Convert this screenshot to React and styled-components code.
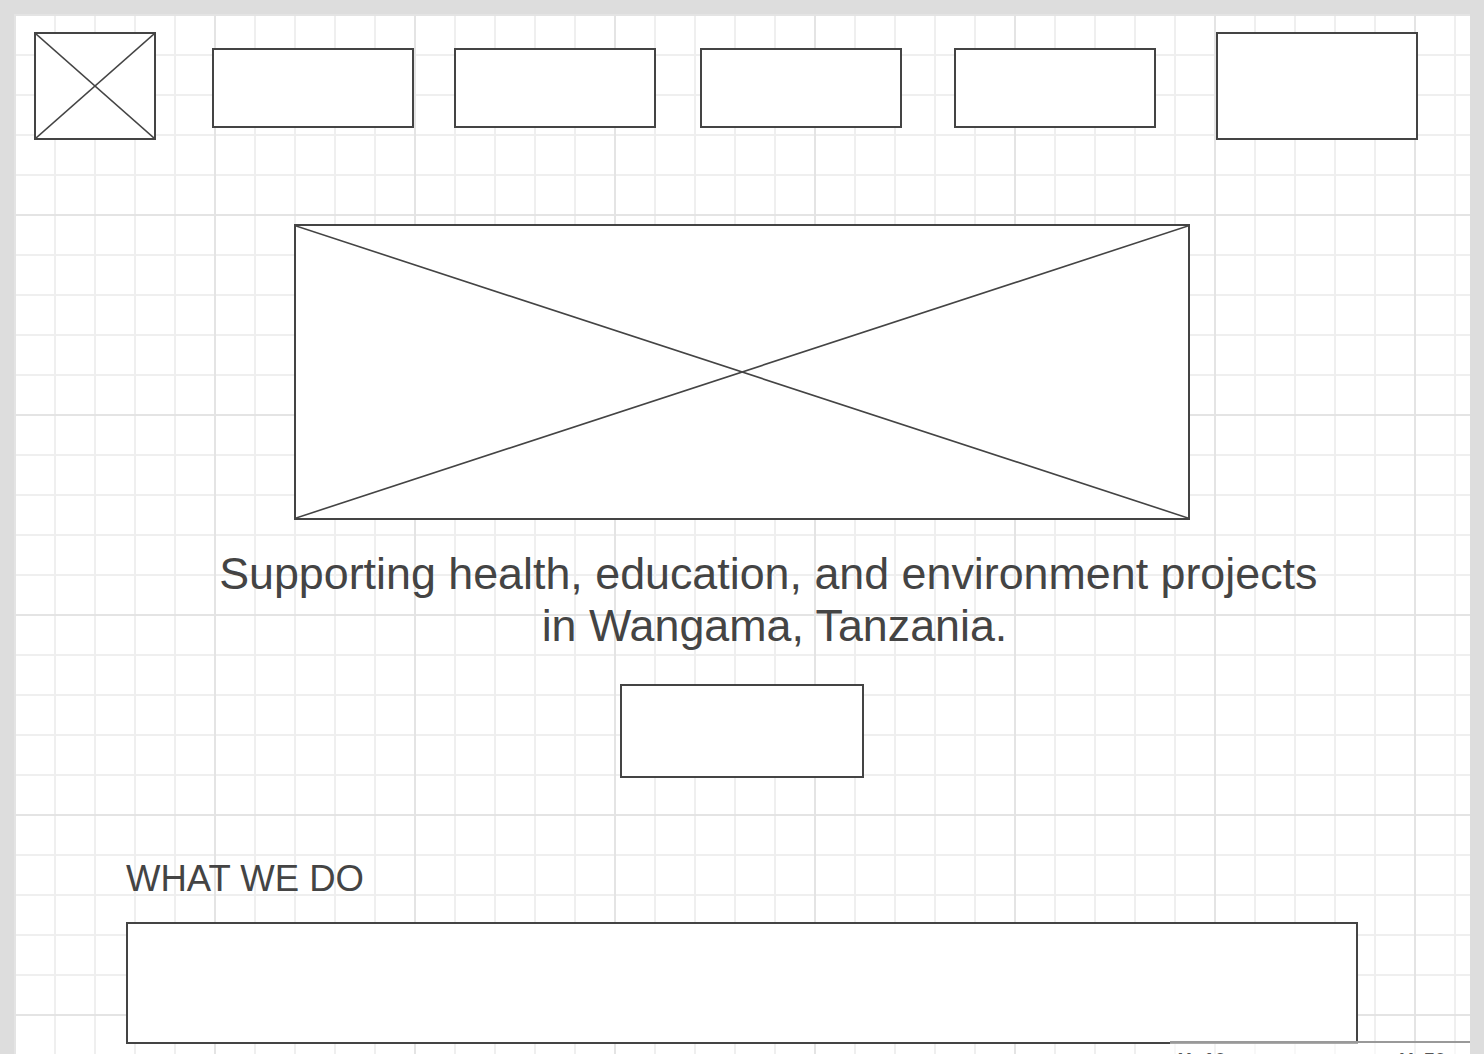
import React from "react";
import styled, { createGlobalStyle } from "styled-components";

const GlobalStyle = createGlobalStyle`
  html, body {
    margin: 0;
    padding: 0;
    background: #dddddd;
    overflow: hidden;
  }
  body {
    font-family: "Liberation Sans", Arial, sans-serif;
    color: #444444;
  }
`;

const Canvas = styled.div`
  position: relative;
  width: 1456px;
  min-height: 1040px;
  margin: 14px 0 0 14px;
  padding: 18px 0 0 0;
  box-sizing: border-box;
  background-color: #ffffff;
  background-image: linear-gradient(to right, #e4e4e4 2px, transparent 2px),
    linear-gradient(to bottom, #e4e4e4 2px, transparent 2px),
    linear-gradient(to right, #efefef 2px, transparent 2px),
    linear-gradient(to bottom, #efefef 2px, transparent 2px);
  background-size: 200px 200px, 200px 200px, 40px 40px, 40px 40px;
  background-position: 0 0;
  display: flex;
  flex-direction: column;
`;

const Box = styled.div`
  box-sizing: border-box;
  border: 2px solid #444444;
  background: #ffffff;
  flex-shrink: 0;
`;

const Header = styled.header`
  display: flex;
  align-items: flex-start;
  padding-left: 20px;
`;

const Logo = styled(Box)`
  width: 122px;
  height: 108px;
  position: relative;
`;

const NavBox = styled(Box)`
  width: 202px;
  height: 80px;
  margin-top: 16px;
  margin-left: ${(p) => p.$gap}px;
`;

const HeaderButton = styled(Box)`
  width: 202px;
  height: 108px;
  margin-left: 60px;
`;

const Cross = styled.svg`
  position: absolute;
  inset: 0;
  width: 100%;
  height: 100%;
  display: block;
`;

const Placeholder = () => (
  <Cross viewBox="0 0 100 100" preserveAspectRatio="none">
    <line x1="0" y1="0" x2="100" y2="100" stroke="#444" strokeWidth="1.6" vectorEffect="non-scaling-stroke" />
    <line x1="100" y1="0" x2="0" y2="100" stroke="#444" strokeWidth="1.6" vectorEffect="non-scaling-stroke" />
  </Cross>
);

const Hero = styled.section`
  display: flex;
  flex-direction: column;
  align-items: center;
`;

const HeroImage = styled(Box)`
  position: relative;
  width: 896px;
  height: 296px;
  margin-top: 84px;
`;

const Tagline = styled.p`
  margin: 27px 0 0 0;
  padding-left: 65px;
  font-size: 44.8px;
  line-height: 52px;
  text-align: center;
  color: #444444;
  white-space: pre;
`;

const CallToAction = styled(Box)`
  width: 244px;
  height: 94px;
  margin-top: 33px;
`;

const Section = styled.section`
  display: flex;
  flex-direction: column;
  padding-left: 112px;
  margin-top: 81px;
`;

const SectionTitle = styled.h2`
  margin: 0;
  font-size: 36.5px;
  font-weight: 400;
  line-height: 40px;
  color: #444444;
`;

const ContentBox = styled(Box)`
  width: 1232px;
  height: 122px;
  margin-top: 23px;
`;

const Coords = styled.div`
  position: absolute;
  left: 1156px;
  top: 1027px;
  width: 300px;
  height: 40px;
  background: rgba(255, 255, 255, 0.55);
  border-top: 2px solid #999999;
  display: flex;
  justify-content: space-between;
  padding: 6px 24px 0 8px;
  box-sizing: border-box;
  font-size: 20px;
  font-weight: 700;
  color: #555555;
`;

export default function App() {
  return (
    <>
      <GlobalStyle />
      <Canvas>
        <Header>
          <Logo>
            <Placeholder />
          </Logo>
          <NavBox $gap={56} />
          <NavBox $gap={40} />
          <NavBox $gap={44} />
          <NavBox $gap={52} />
          <HeaderButton />
        </Header>

        <Hero>
          <HeroImage>
            <Placeholder />
          </HeroImage>
          <Tagline>
            {"Supporting health, education, and environment projects \nin Wangama, Tanzania."}
          </Tagline>
          <CallToAction />
        </Hero>

        <Section>
          <SectionTitle>WHAT WE DO</SectionTitle>
          <ContentBox />
        </Section>

        <Coords>
          <span>X: 10</span>
          <span>Y: 50</span>
        </Coords>
      </Canvas>
    </>
  );
}
